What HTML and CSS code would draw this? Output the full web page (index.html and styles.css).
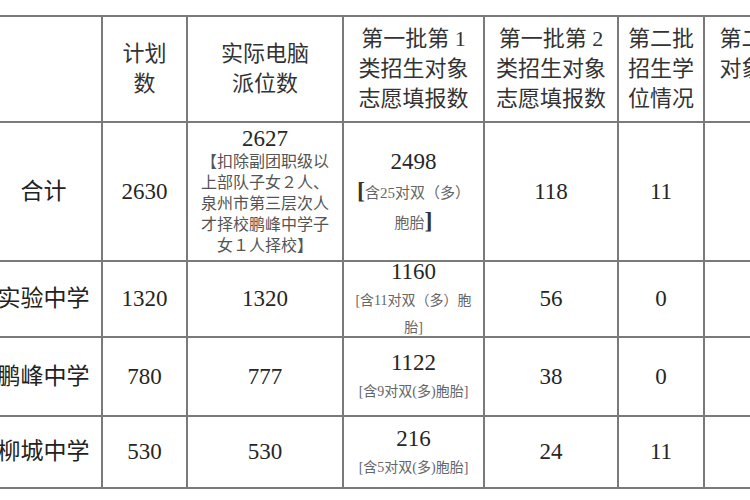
FILE: index.html
```html
<!DOCTYPE html>
<html lang="zh-CN">
<head>
<meta charset="utf-8">
<title>招生志愿填报统计</title>
<link rel="stylesheet" href="styles.css">
</head>
<body>
<div class="page">
<table class="grid">
  <colgroup>
    <col class="w0"><col class="w1"><col class="w2"><col class="w3"><col class="w4"><col class="w5"><col class="w6">
  </colgroup>
  <tr class="rh">
    <th></th>
    <th>计划<br>数</th>
    <th>实际电脑<br>派位数</th>
    <th>第一批第 1<br>类招生对象<br>志愿填报数</th>
    <th>第一批第 2<br>类招生对象<br>志愿填报数</th>
    <th>第二批<br>招生学<br>位情况</th>
    <th class="cut">第二批招生<br>对象志愿数<br>&nbsp;</th>
  </tr>
  <tr class="r1">
    <td class="name">合计</td>
    <td>2630</td>
    <td>
      <div class="num">2627</div>
      <div class="note">【扣除副团职级以<br>上部队子女２人、<br>泉州市第三层次人<br>才择校鹏峰中学子<br>女１人择校】</div>
    </td>
    <td>
      <div class="num n1">2498</div>
      <div class="twin"><span class="br">[</span>含25对双（多）<br>胞胎<span class="br">]</span></div>
    </td>
    <td>118</td>
    <td>11</td>
    <td></td>
  </tr>
  <tr class="r2">
    <td class="name">实验中学</td>
    <td>1320</td>
    <td>1320</td>
    <td>
      <div class="ovf">
        <div class="num n2">1160</div>
        <div class="tiny">[含11对双（多）胞<br>胎]</div>
      </div>
    </td>
    <td>56</td>
    <td>0</td>
    <td></td>
  </tr>
  <tr class="r3">
    <td class="name">鹏峰中学</td>
    <td>780</td>
    <td>777</td>
    <td>
      <div class="num n2">1122</div>
      <div class="tiny">[含9对双(多)胞胎]</div>
    </td>
    <td>38</td>
    <td>0</td>
    <td></td>
  </tr>
  <tr class="r4">
    <td class="name">柳城中学</td>
    <td>530</td>
    <td>530</td>
    <td>
      <div class="num n2">216</div>
      <div class="tiny">[含5对双(多)胞胎]</div>
    </td>
    <td>24</td>
    <td>11</td>
    <td></td>
  </tr>
</table>
</div>
</body>
</html>
```
FILE: styles.css
```css
html, body {
  margin: 0;
  padding: 0;
  background: #ffffff;
}
.page {
  width: 750px;
  height: 500px;
  overflow: hidden;
  padding-top: 15px;
  box-sizing: border-box;
}
.grid {
  margin-left: -16px;
  border-collapse: collapse;
  table-layout: fixed;
  width: 860px;
  font-family: "Liberation Serif", "Noto Sans CJK SC", serif;
  color: #262626;
}
.w0 { width: 117px; }
.w1 { width: 85px; }
.w2 { width: 156px; }
.w3 { width: 141px; }
.w4 { width: 134px; }
.w5 { width: 86px; }
.w6 { width: 141px; }
.grid th, .grid td {
  border: 2px solid #7a7a7a;
  text-align: center;
  vertical-align: middle;
  padding: 0;
  overflow: visible;
}
.grid th {
  font-weight: normal;
  font-size: 22px;
  line-height: 30px;
  color: #333;
}
.grid td {
  font-size: 23px;
  line-height: 28px;
}
.rh { height: 106px; }
.r1 { height: 139px; }
.r2 { height: 76px; }
.r3 { height: 79px; }
.r4 { height: 72px; }
.name {
  font-size: 22px;
  color: #222;
}
.num {
  font-size: 23px;
  line-height: 24px;
}
.n1 { line-height: 30px; }
.n2 { line-height: 30px; }
.note {
  font-size: 16px;
  line-height: 21px;
  color: #555;
}
.twin {
  font-size: 15px;
  line-height: 27px;
  color: #666;
}
.br {
  font-size: 24px;
  color: #333;
  font-weight: bold;
}
.tiny {
  font-size: 14px;
  line-height: 27px;
  color: #666;
  white-space: nowrap;
}
.ovf {
  height: 60px;
  display: flex;
  flex-direction: column;
  justify-content: center;
}
```
